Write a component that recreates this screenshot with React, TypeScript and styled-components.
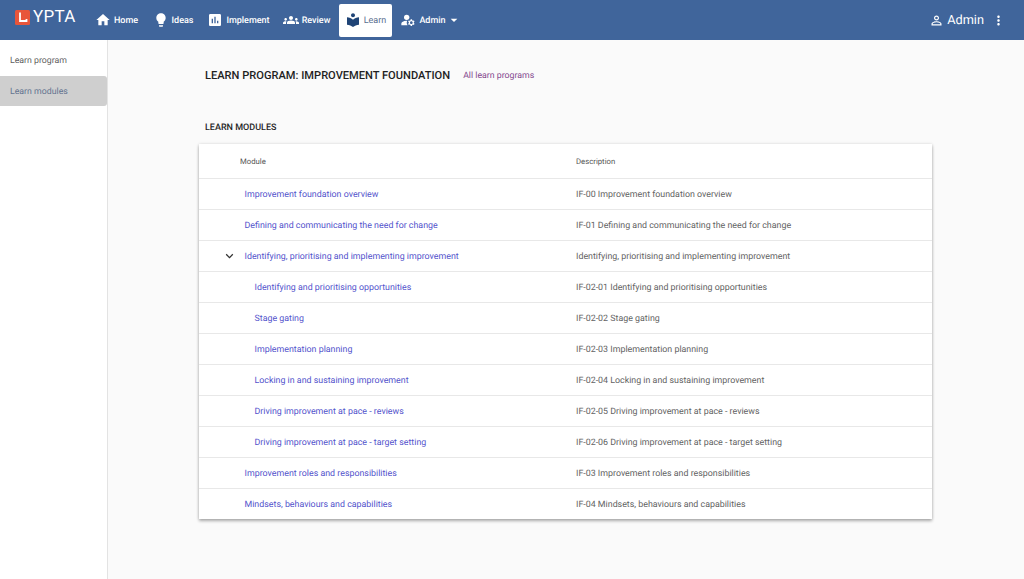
import React from "react"
import styled, { createGlobalStyle } from "styled-components"
import {
  MdHome,
  MdLightbulb,
  MdAssessment,
  MdGroups,
  MdLocalLibrary,
  MdManageAccounts,
  MdArrowDropDown,
  MdPersonOutline,
  MdMoreVert,
  MdKeyboardArrowDown,
} from "react-icons/md"

const GlobalStyle = createGlobalStyle`
  html, body { margin: 0; padding: 0; height: 100%; }
  body {
    font-family: Roboto, "Liberation Sans", sans-serif;
    background: #fafafa;
    overflow: hidden;
    text-rendering: geometricPrecision;
  }
  * { box-sizing: border-box; }
`

const Page = styled.div`
  width: 1024px;
  height: 579px;
  display: flex;
  flex-direction: column;
`

const TopBar = styled.header`
  height: 40px;
  flex: none;
  background: #40659b;
  color: #fff;
  display: flex;
  align-items: center;
  padding: 0 18px 0 15px;
`

const Logo = styled.div`
  display: flex;
  align-items: center;
  gap: 3px;
  width: 75px;
  font-size: 17px;
  letter-spacing: 0.3px;
  color: #fff;
  margin-top: -6px;
`

const LogoMark = styled.svg`
  width: 15px;
  height: 15px;
  flex: none;
`

const Nav = styled.nav`
  display: flex;
  align-items: center;
`

const NavLabel = styled.span`
  padding-top: 1px;
`

const NavItem = styled.a<{ $active?: boolean; $width: number }>`
  width: ${(p) => p.$width}px;
  height: 33px;
  display: flex;
  align-items: center;
  justify-content: center;
  gap: 3px;
  border-radius: 2px;
  font-size: 9px;
  font-weight: ${(p) => (p.$active ? 400 : 500)};
  color: ${(p) => (p.$active ? "#5a6f8f" : "#fff")};
  background: ${(p) => (p.$active ? "#fff" : "transparent")};
  svg {
    flex: none;
    font-size: 16px;
    color: ${(p) => (p.$active ? "#1f4476" : "#fff")};
  }
`

const Caret = styled(MdArrowDropDown)`
  margin-left: -3px;
`

const UserArea = styled.div`
  margin-left: auto;
  display: flex;
  align-items: center;
  font-size: 12.75px;
  gap: 3px;
  svg {
    font-size: 15px;
  }
`

const MoreButton = styled.span`
  display: flex;
  margin-left: 4px;
`

const Body = styled.div`
  flex: 1;
  display: flex;
  min-height: 0;
`

const Sidebar = styled.aside`
  width: 108px;
  flex: none;
  background: #fff;
  border-right: 1px solid #e3e3e3;
  padding-top: 5px;
`

const SideItem = styled.a<{ $active?: boolean }>`
  height: 30px;
  margin-bottom: 1px;
  display: flex;
  align-items: center;
  padding: 2px 0 0 10px;
  font-size: 8.75px;
  border-radius: 0 3px 3px 0;
  color: ${(p) => (p.$active ? "#64748f" : "#5f5f5f")};
  background: ${(p) => (p.$active ? "#cfcfcf" : "transparent")};
`

const Main = styled.main`
  flex: 1;
  padding: 29px 0 0 91px;
  background: #fafafa;
`

const TitleRow = styled.div`
  display: flex;
  align-items: center;
  gap: 13px;
  margin-left: 6px;
  height: 13px;
`

const Title = styled.h1`
  margin: 0;
  font-size: 11.1px;
  font-weight: 500;
  color: #1f1f1f;
`

const TitleLink = styled.a`
  font-size: 8.75px;
  color: #84488e;
`

const SectionTitle = styled.h2`
  margin: 40px 0 0 6px;
  height: 12px;
  font-size: 9px;
  line-height: 12px;
  font-weight: 500;
  color: #1f1f1f;
`

const Card = styled.div`
  margin-top: 10px;
  width: 733px;
  background: #fff;
  box-shadow: 0 2px 3px rgba(0, 0, 0, 0.3), 0 0 3px rgba(0, 0, 0, 0.12);
`

const Row = styled.div<{ $head?: boolean }>`
  height: ${(p) => (p.$head ? 34 : 31)}px;
  display: grid;
  grid-template-columns: 377px 1fr;
  align-items: center;
  border-top: ${(p) => (p.$head ? "none" : "1px solid #e8e8e8")};
`

const ModuleCell = styled.div<{ $depth: number }>`
  position: relative;
  padding: 2px 0 0 ${(p) => 45.5 + p.$depth * 10}px;
  font-size: 8.85px;
  color: #5353cc;
`

const Toggle = styled.span`
  position: absolute;
  left: 23px;
  top: 50%;
  transform: translateY(-50%);
  display: flex;
  font-size: 15px;
  color: #333;
`

const DescCell = styled.div`
  padding-top: 2px;
  font-size: 8.85px;
  color: #636363;
`

const HeadCell = styled.div<{ $indent?: number }>`
  padding-left: ${(p) => p.$indent ?? 0}px;
  font-size: 7.75px;
  color: #555;
`

type Module = { name: string; desc: string; depth?: number; open?: boolean }

const modules: Module[] = [
  { name: "Improvement foundation overview", desc: "IF-00 Improvement foundation overview" },
  { name: "Defining and communicating the need for change", desc: "IF-01 Defining and communicating the need for change" },
  { name: "Identifying, prioritising and implementing improvement", desc: "Identifying, prioritising and implementing improvement", open: true },
  { name: "Identifying and prioritising opportunities", desc: "IF-02-01 Identifying and prioritising opportunities", depth: 1 },
  { name: "Stage gating", desc: "IF-02-02 Stage gating", depth: 1 },
  { name: "Implementation planning", desc: "IF-02-03 Implementation planning", depth: 1 },
  { name: "Locking in and sustaining improvement", desc: "IF-02-04 Locking in and sustaining improvement", depth: 1 },
  { name: "Driving improvement at pace - reviews", desc: "IF-02-05 Driving improvement at pace - reviews", depth: 1 },
  { name: "Driving improvement at pace - target setting", desc: "IF-02-06 Driving improvement at pace - target setting", depth: 1 },
  { name: "Improvement roles and responsibilities", desc: "IF-03 Improvement roles and responsibilities" },
  { name: "Mindsets, behaviours and capabilities", desc: "IF-04 Mindsets, behaviours and capabilities" },
]

const navItems = [
  { label: "Home", icon: <MdHome />, width: 53 },
  { label: "Ideas", icon: <MdLightbulb />, width: 60 },
  { label: "Implement", icon: <MdAssessment />, width: 71 },
  { label: "Review", icon: <MdGroups />, width: 65 },
  { label: "Learn", icon: <MdLocalLibrary />, width: 53, active: true },
]

const App = () => {
  return (
    <Page>
      <GlobalStyle />
      <TopBar>
        <Logo>
          <LogoMark viewBox="0 0 15 15">
            <rect width="15" height="15" rx="1.5" fill="#e8553a" />
            <path d="M5 2.5v8.5h6.5V9" fill="none" stroke="#fff" strokeWidth="1.8" />
          </LogoMark>
          YPTA
        </Logo>
        <Nav>
          {navItems.map((item) => (
            <NavItem key={item.label} $width={item.width} $active={item.active}>
              {item.icon}
              <NavLabel>{item.label}</NavLabel>
            </NavItem>
          ))}
          <NavItem $width={78}>
            <MdManageAccounts />
            <NavLabel>Admin</NavLabel>
            <Caret />
          </NavItem>
        </Nav>
        <UserArea>
          <MdPersonOutline />
          <NavLabel>Admin</NavLabel>
          <MoreButton>
            <MdMoreVert />
          </MoreButton>
        </UserArea>
      </TopBar>
      <Body>
        <Sidebar>
          <SideItem>Learn program</SideItem>
          <SideItem $active>Learn modules</SideItem>
        </Sidebar>
        <Main>
          <TitleRow>
            <Title>LEARN PROGRAM: IMPROVEMENT FOUNDATION</Title>
            <TitleLink>All learn programs</TitleLink>
          </TitleRow>
          <SectionTitle>LEARN MODULES</SectionTitle>
          <Card>
            <Row $head>
              <HeadCell $indent={41}>Module</HeadCell>
              <HeadCell>Description</HeadCell>
            </Row>
            {modules.map((m) => (
              <Row key={m.name}>
                <ModuleCell $depth={m.depth ?? 0}>
                  {m.open && (
                    <Toggle>
                      <MdKeyboardArrowDown />
                    </Toggle>
                  )}
                  {m.name}
                </ModuleCell>
                <DescCell>{m.desc}</DescCell>
              </Row>
            ))}
          </Card>
        </Main>
      </Body>
    </Page>
  )
}

export default App
